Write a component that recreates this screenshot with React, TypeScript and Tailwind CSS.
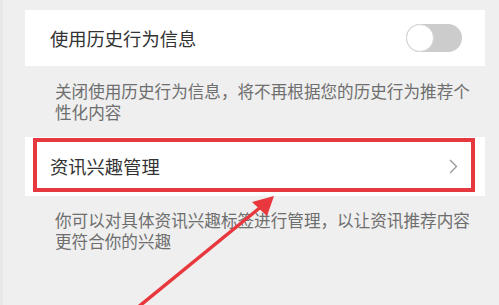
export default function App() {
  const font = { fontFamily: '"Noto Sans CJK SC", "Noto Sans", sans-serif' };

  return (
    <div className="relative w-[499px] h-[305px] overflow-hidden bg-[#efefef]" style={font}>
      <div className="absolute left-0 top-0 h-full w-[3px] bg-[#e8e8e8]" />
      <div className="pt-[10px]">
        {/* 使用历史行为信息 */}
        <div className="ml-[25px] w-[460px] h-[56px] bg-white flex items-center justify-between pl-[25px] pr-[23px]">
          <span className="text-[18.3px] text-[#333] leading-none">使用历史行为信息</span>
          <div className="relative w-[56px] h-[28px] rounded-full bg-[#cccccc]">
            <div className="absolute left-0 top-0 w-[28px] h-[28px] rounded-full bg-white border border-[#d6d6d6]" />
          </div>
        </div>
        <p className="ml-[55px] w-[420px] mt-[15px] text-[16.6px] leading-[21px] text-[#6e6e6e]">
          关闭使用历史行为信息，将不再根据您的历史行为推荐个性化内容
        </p>

        {/* 资讯兴趣管理 */}
        <div className="relative mt-[14px] ml-[25px] w-[460px] h-[59px] bg-white flex items-center justify-between pl-[25px] pr-[27px]">
          <span className="text-[18.3px] text-[#333] leading-none">资讯兴趣管理</span>
          <svg width="9" height="15" viewBox="0 0 9 15" fill="none">
            <path d="M1 1l6.5 6.5L1 14" stroke="#9a9a9a" strokeWidth="1.4" />
          </svg>
          <div className="absolute left-[8px] top-[1px] w-[442px] h-[54px] border-4 border-[#e6393f]" />
        </div>
        <p className="ml-[55px] w-[420px] mt-[14px] text-[16.6px] leading-[21px] text-[#6e6e6e]">
          你可以对具体资讯兴趣标签进行管理，以让资讯推荐内容更符合你的兴趣
        </p>
      </div>

      {/* annotation arrow */}
      <svg className="absolute left-0 top-0" width="499" height="305" viewBox="0 0 499 305">
        <line x1="137" y1="308" x2="262" y2="206" stroke="#e8383d" strokeWidth="3.5" strokeLinecap="round" />
        <polygon points="274,196 252,202 267,216" fill="#e8383d" />
      </svg>
    </div>
  );
}
